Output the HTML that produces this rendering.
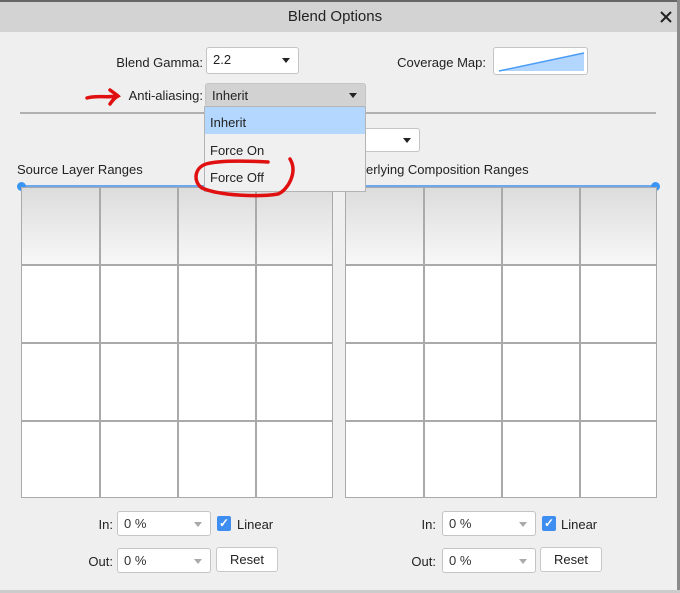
<!DOCTYPE html>
<html><head><style>
*{box-sizing:border-box;margin:0;padding:0}
body{width:680px;height:593px;background:#efefef;font-family:"Liberation Sans",sans-serif;font-size:13px;color:#222;position:relative;overflow:hidden}
.a{position:absolute}
.sel{position:absolute;background:#fff;border:1px solid #c4c4c4;border-radius:3px;padding:4px 6px;font-size:13px}
.sel .tri{position:absolute;right:8px;top:10px;width:0;height:0;border-left:4px solid transparent;border-right:4px solid transparent;border-top:5px solid #222}
.sel.dis{color:#333}
.sel.dis .tri{border-top-color:#aaa}
.lbl{position:absolute;text-align:right}
.btn{position:absolute;background:#fff;border:1px solid #c8c8c8;border-radius:3px;text-align:center;padding-top:4px}
.cb{position:absolute;width:14px;height:15px;background:#3d8ef0;border-radius:2px;color:#fff;font-size:12px;line-height:15px;text-align:center;font-weight:bold}
.grid{position:absolute;width:312px;height:311px;background:#fff;border:1px solid #aaa}
.grid .top{position:absolute;left:0;top:0;right:0;height:77px;background:linear-gradient(#dcdcdc,#f8f8f8)}
.grid .v{position:absolute;top:0;bottom:0;width:2px;background:#aaa}
.grid .h{position:absolute;left:0;right:0;height:2px;background:#aaa}
.dot{position:absolute;width:9px;height:9px;border-radius:50%;background:#3a95f5}
</style></head><body>
<div class="a" style="left:0;top:0;width:680px;height:2px;background:#666"></div>
<div class="a" style="left:0;top:2px;width:680px;height:30px;background:#d3d3d3"></div>
<div class="a" style="left:0;top:8px;width:670px;text-align:center;font-size:15px;color:#222">Blend Options</div>
<svg class="a" style="left:660px;top:11px" width="12" height="12"><path d="M1,1 L11,11 M11,1 L1,11" stroke="#222" stroke-width="2"/></svg>
<div class="a" style="left:677px;top:0;width:3px;height:593px;background:#8a8a8a"></div>

<div class="lbl" style="left:80px;width:123px;top:55px">Blend Gamma:</div>
<div class="sel" style="left:206px;top:47px;width:93px;height:27px">2.2<div class="tri"></div></div>
<div class="lbl" style="left:380px;width:106px;top:55px">Coverage Map:</div>
<div class="a" style="left:493px;top:47px;width:95px;height:28px;background:#fff;border:1px solid #c4c4c4;border-radius:3px">
<svg width="93" height="26" style="position:absolute;left:0;top:0"><polygon points="5,23 90,5 90,23" fill="#b3d6ff"/><line x1="5" y1="23" x2="90" y2="5" stroke="#4a9cf5" stroke-width="1.5"/></svg></div>

<svg class="a" style="left:84px;top:85px" width="40" height="22"><path d="M3,13 C12,10 22,13 33,11 M26,5 C30,8 33,10 34,11 C30,13 28,16 26,19" stroke="#e01010" stroke-width="3.5" fill="none" stroke-linecap="round"/></svg>
<div class="lbl" style="left:100px;width:103px;top:88px">Anti-aliasing:</div>
<div class="sel" style="left:205px;top:83px;width:161px;height:24px;background:#d2d2d2;padding-top:4px">Inherit<div class="tri" style="top:9px"></div></div>

<div class="a" style="left:20px;top:112px;width:636px;height:2px;background:#b0b0b0"></div>
<div class="sel" style="left:330px;top:128px;width:90px;height:24px"><div class="tri" style="top:9px"></div></div>

<div class="a" style="left:17px;top:162px">Source Layer Ranges</div>
<div class="a" style="left:366px;top:162px">erlying Composition Ranges</div>
<div class="a" style="left:21px;top:185px;width:635px;height:2px;background:#6aa8ef"></div>
<div class="dot" style="left:17px;top:182px"></div>
<div class="dot" style="left:651px;top:182px"></div>

<div class="grid" style="left:21px;top:187px"><div class="top"></div>
<div class="v" style="left:77px"></div><div class="v" style="left:155px"></div><div class="v" style="left:233px"></div>
<div class="h" style="top:76px"></div><div class="h" style="top:154px"></div><div class="h" style="top:232px"></div></div>
<div class="grid" style="left:345px;top:187px"><div class="top"></div>
<div class="v" style="left:77px"></div><div class="v" style="left:155px"></div><div class="v" style="left:233px"></div>
<div class="h" style="top:76px"></div><div class="h" style="top:154px"></div><div class="h" style="top:232px"></div></div>

<div class="a" style="left:204px;top:106px;width:162px;height:86px;background:#f0f0f0;border:1px solid #b4b4b4">
<div style="height:27px;background:#b3d7ff;padding:8px 5px 0">Inherit</div>
<div style="padding:9px 5px 0;height:29px">Force On</div>
<div style="padding:7px 5px 0">Force Off</div></div>
<svg class="a" style="left:190px;top:152px" width="115" height="50"><path d="M100,7 C108,20 98,38 88,42 C70,45 30,44 12,36 C3,30 4,16 16,12 C30,8 60,9 78,10" stroke="#e01010" stroke-width="3.5" fill="none" stroke-linecap="round"/></svg>

<div class="lbl" style="left:60px;width:53px;top:517px">In:</div>
<div class="sel dis" style="left:117px;top:511px;width:94px;height:25px">0 %<div class="tri"></div></div>
<div class="cb" style="left:217px;top:516px">✓</div>
<div class="a" style="left:237px;top:517px">Linear</div>
<div class="lbl" style="left:60px;width:53px;top:554px">Out:</div>
<div class="sel dis" style="left:117px;top:548px;width:94px;height:25px">0 %<div class="tri"></div></div>
<div class="btn" style="left:216px;top:547px;width:62px;height:25px">Reset</div>

<div class="lbl" style="left:380px;width:56px;top:517px">In:</div>
<div class="sel dis" style="left:442px;top:511px;width:94px;height:25px">0 %<div class="tri"></div></div>
<div class="cb" style="left:542px;top:516px">✓</div>
<div class="a" style="left:561px;top:517px">Linear</div>
<div class="lbl" style="left:380px;width:56px;top:554px">Out:</div>
<div class="sel dis" style="left:442px;top:548px;width:94px;height:25px">0 %<div class="tri"></div></div>
<div class="btn" style="left:540px;top:547px;width:62px;height:25px">Reset</div>
<div class="a" style="left:0;top:590px;width:680px;height:3px;background:#ccc"></div>
</body></html>
